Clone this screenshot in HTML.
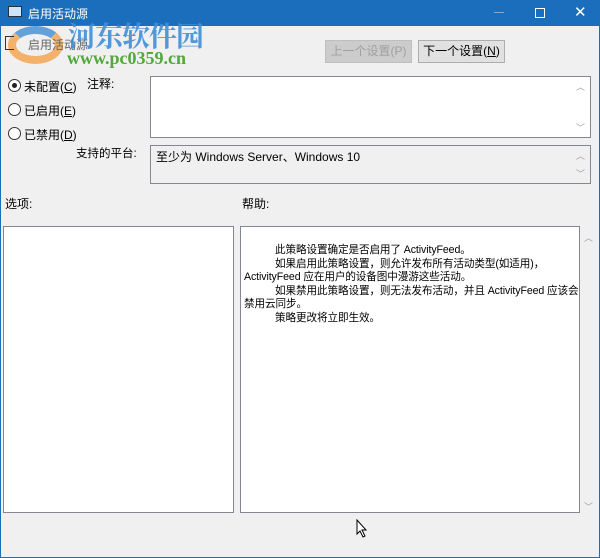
<!DOCTYPE html>
<html><head><meta charset="utf-8"><style>
*{margin:0;padding:0;box-sizing:border-box}
body{width:600px;height:558px;overflow:hidden;background:#f0f0f0;font-family:"Liberation Sans","Microsoft YaHei","Noto Sans CJK SC",sans-serif;font-size:12px;color:#000;position:relative}
.a{position:absolute}
.win{position:absolute;left:0;top:0;width:600px;height:558px;border:1px solid #1a6fb9;border-top:none}
.tb{left:0;top:0;width:600px;height:26px;background:#1b6ebc;color:#fff}
.btn{height:23px;border:1px solid #adadad;background:#e1e1e1;text-align:center;line-height:21px;font-size:12px}
.box{border:1px solid #828790;background:#fff}
.r{width:13px;height:13px;border:1px solid #333;border-radius:50%;background:#fff}
.arr{color:#a0a0a0;font-size:9px}
</style></head><body>
<div class="win"></div>
<div class="a tb">
 <div class="a" style="left:8px;top:6px;width:14px;height:11px;background:#cfe3f7;border:1px solid #234"></div>
 <div class="a" style="left:28px;top:5px;font-size:12px">启用活动源</div>
 <div class="a" style="left:494px;top:12px;width:10px;height:1px;background:#7fa9d6"></div>
 <div class="a" style="left:535px;top:8px;width:10px;height:10px;border:1px solid #fff"></div>
 <div class="a" style="left:574px;top:3px;font-size:15px">✕</div>
</div>
<div class="a" style="left:8px;top:26px;width:55px;height:38px;border-radius:50%;border:8px solid #f4a24a;border-top-color:#3f8fd8;border-left-color:#f4a24a;opacity:.8"></div>
<div class="a" style="left:5px;top:36px;width:9px;height:14px;border:1px solid #333;border-right:none"></div>
<div class="a" style="left:28px;top:36px;color:#666">启用活动源</div>
<div class="a" style="left:68px;top:15px;font-size:28px;font-weight:bold;color:#3f8fd8;font-family:'Noto Serif CJK SC',serif;letter-spacing:-1px;opacity:.9">河东软件园</div>
<div class="a" style="left:67px;top:48px;font-size:18px;font-weight:bold;color:#52a83a;font-family:'Liberation Serif',serif">www.pc0359.cn</div>
<div class="a btn" style="left:325px;top:40px;width:87px;color:#a0a0a0;background:#cccccc;border-color:#bfbfbf">上一个设置(P)</div>
<div class="a btn" style="left:418px;top:40px;width:87px">下一个设置(<u>N</u>)</div>
<div class="a r" style="left:8px;top:79px"><div class="a" style="left:3px;top:3px;width:5px;height:5px;border-radius:50%;background:#222"></div></div>
<div class="a" style="left:24px;top:78px">未配置(<u>C</u>)</div>
<div class="a r" style="left:8px;top:103px"></div>
<div class="a" style="left:24px;top:102px">已启用(<u>E</u>)</div>
<div class="a r" style="left:8px;top:127px"></div>
<div class="a" style="left:24px;top:126px">已禁用(<u>D</u>)</div>
<div class="a" style="left:87px;top:75px">注释:</div>
<div class="a box" style="left:150px;top:76px;width:441px;height:62px"><span class="a arr" style="right:5px;top:3px">︿</span><span class="a arr" style="right:5px;bottom:3px">﹀</span></div>
<div class="a" style="left:76px;top:145px;font-size:11.5px">支持的平台:</div>
<div class="a box" style="left:150px;top:145px;width:441px;height:39px;background:#f0f0f0;padding:2px 5px">至少为 Windows Server、Windows 10<span class="a arr" style="right:5px;top:3px">︿</span><span class="a arr" style="right:5px;bottom:3px">﹀</span></div>
<div class="a" style="left:5px;top:195px">选项:</div>
<div class="a" style="left:242px;top:195px">帮助:</div>
<div class="a box" style="left:3px;top:226px;width:231px;height:287px"></div>
<div class="a box" style="left:240px;top:226px;width:340px;height:287px;padding:17px 0 0 3px;line-height:13.5px;font-size:10.6px;letter-spacing:-0.1px">
<div style="text-indent:31px">此策略设置确定是否启用了 ActivityFeed。</div>
<div style="text-indent:31px">如果启用此策略设置，则允许发布所有活动类型(如适用)，ActivityFeed 应在用户的设备图中漫游这些活动。</div>
<div style="text-indent:31px">如果禁用此策略设置，则无法发布活动，并且 ActivityFeed 应该会禁用云同步。</div>
<div style="text-indent:31px">策略更改将立即生效。</div>
</div>
<span class="a arr" style="left:584px;top:231px">︿</span><span class="a arr" style="left:584px;top:500px">﹀</span>
<svg class="a" style="left:356px;top:519px" width="12" height="19" viewBox="0 0 12 19"><path d="M1 1 L1 15 L4 12 L7 18 L9 17 L6 11 L10 11 Z" fill="#fff" stroke="#000" stroke-width="1"/></svg>
</body></html>
